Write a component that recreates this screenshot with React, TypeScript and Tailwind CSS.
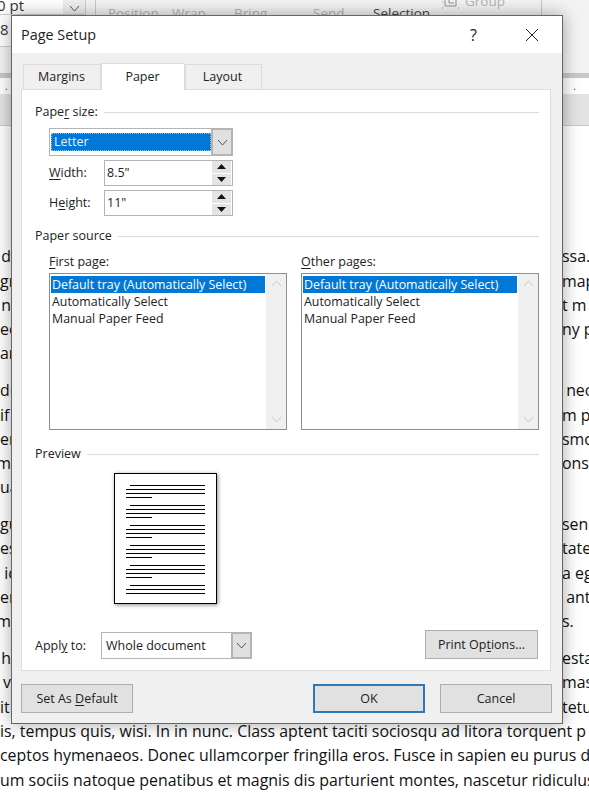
import React from "react";

const font = { fontFamily: '"Open Sans", "Noto Sans", sans-serif' };

const lines: [string, string][] = [
  ["d", "ssa."],
  ["gn", "map"],
  ["n", "t m"],
  ["ec", "ny p"],
  ["an", ""],
];
const lines2: [string, string][] = [
  ["du", " nec"],
  ["if", "m p"],
  ["er", "smo"],
  ["m", "onse"],
  ["ua", ""],
];
const lines3: [string, string][] = [
  ["gu", "sen"],
  ["es", "tate"],
  [" ic", "a eg"],
  ["er", " ant"],
  ["m", "s."],
];
const lines4: [string, string][] = [
  ["h", "esta"],
  ["v", "mas"],
  ["it", "tetu"],
];

function Para({ rows }: { rows: [string, string][] }) {
  return (
    <div className="flex flex-col">
      {rows.map(([a, b], i) => (
        <div key={i} className="flex h-[24.3px] items-center whitespace-pre">
          <span className={a.length === 1 ? "w-[11px] flex justify-end overflow-hidden" : "w-[11px] flex justify-start overflow-hidden"}>{a}</span>
          <span className="flex-1" />
          <span className="w-[27px] overflow-hidden">{b}</span>
        </div>
      ))}
    </div>
  );
}

function U({ children }: { children: React.ReactNode }) {
  return <span className="underline underline-offset-2 decoration-1">{children}</span>;
}

function Chevron({ up = false, className = "" }: { up?: boolean; className?: string }) {
  return (
    <svg width="11" height="7" viewBox="0 0 11 7" className={className}>
      <path d={up ? "M1 6 L5.5 1 L10 6" : "M1 1 L5.5 6 L10 1"} fill="none" stroke="currentColor" strokeWidth="1" />
    </svg>
  );
}

function Spinner({ value, label }: { value: string; label: React.ReactNode }) {
  return (
    <div className="flex items-center h-[26px]">
      <span className="w-[55px] pt-px text-[12.5px] text-[#222]">{label}</span>
      <div className="w-[129px] h-[26px] border border-[#b4b4b4] bg-white flex items-center justify-between pl-[2px] pr-[1px]">
        <span className="pt-px text-[12.5px] text-[#222]">{value}</span>
        <div className="flex flex-col gap-[1px] w-[19px] h-[24px]">
          <div className="flex-1 bg-[#e3e3e3] flex items-center justify-center">
            <svg width="9" height="5" viewBox="0 0 9 5"><path d="M4.5 0 L9 5 L0 5 Z" fill="#111" /></svg>
          </div>
          <div className="flex-1 bg-[#e3e3e3] flex items-center justify-center">
            <svg width="9" height="5" viewBox="0 0 9 5"><path d="M0 0 L9 0 L4.5 5 Z" fill="#111" /></svg>
          </div>
        </div>
      </div>
    </div>
  );
}

function Legend({ children }: { children: React.ReactNode }) {
  return (
    <div className="flex items-center gap-[6px] h-[18px] text-[12.5px] text-[#222]">
      <span className="whitespace-nowrap">{children}</span>
      <span className="flex-1 h-px bg-[#dcdcdc]" />
    </div>
  );
}

function ListBox({ title }: { title: React.ReactNode }) {
  return (
    <div className="w-[238px]">
      <div className="h-[18px] flex items-center text-[12.5px] text-[#222]">{title}</div>
      <div className="mt-[2px] h-[157px] border border-[#8f8f8f] bg-white flex p-[1px]">
        <div className="flex-1 text-[12.4px] leading-[17px] pt-[1px] text-[#222]">
          <div className="bg-[#0078d7] text-white pl-[1px] mr-[1px]">Default tray (Automatically Select)</div>
          <div className="pl-[1px]">Automatically Select</div>
          <div className="pl-[1px]">Manual Paper Feed</div>
        </div>
        <div className="w-[20px] bg-[#f0f0f0] flex flex-col items-center justify-between py-[6px] text-[#c8c8c8] -my-[1px] -mr-[1px]">
          <Chevron up />
          <Chevron />
        </div>
      </div>
    </div>
  );
}

function Btn({ children, className = "" }: { children: React.ReactNode; className?: string }) {
  return (
    <div className={"h-[29px] bg-[#e1e1e1] flex items-center justify-center text-[12.5px] text-[#222] pt-px " + className}>
      <span className="whitespace-pre">{children}</span>
    </div>
  );
}

function PreviewLines() {
  const groups = [0, 1, 2, 3, 4];
  return (
    <div className="pt-[11px] pl-[11px] flex flex-col">
      {groups.map((g) => (
        <div key={g} className="flex flex-col mb-[7px]">
          <div className="h-px w-[75px] ml-[4px] bg-black mb-[3px]" />
          <div className="h-px w-[79px] bg-black mb-[3px]" />
          <div className="h-px w-[79px] bg-black mb-[3px]" />
          <div className="h-px w-[26px] bg-black" />
        </div>
      ))}
      <div className="flex flex-col">
        <div className="h-px w-[75px] ml-[4px] bg-black mb-[3px]" />
        <div className="h-px w-[79px] bg-black mb-[3px]" />
        <div className="h-px w-[79px] bg-black" />
      </div>
    </div>
  );
}

export default function App() {
  return (
    <div className="relative w-[589px] h-[796px] overflow-hidden bg-white text-[#111]" style={font}>
      {/* Ribbon */}
      <div className="h-[73px] bg-[#f3f3f3] flex items-start">
        <div className="w-[86px] h-[47px] border-r border-[#cfcfcf] border-b flex flex-col shrink-0">
          <div className="h-[15px] flex border-b border-[#cfcfcf]">
            <div className="w-[63px] bg-white text-[15px] leading-[10px] text-[#333] whitespace-nowrap -indent-[3px] overflow-hidden">0 pt</div>
            <div className="flex-1 bg-[#eeeeee] flex items-end justify-center pb-[2px] text-[#555]"><Chevron /></div>
          </div>
          <div className="flex-1 flex items-center bg-white text-[15px] text-[#333] pb-[2px]">8</div>
        </div>
        <div className="w-[10px] h-[15px] border-r border-[#c8c8c8] shrink-0" />
        <div className="w-[445px] h-[15px] overflow-hidden flex text-[13.5px] leading-[18px] text-[#b5b5b5] pl-[12px] pt-[4px] whitespace-nowrap shrink-0">
          <span className="w-[64px] shrink-0">Position</span>
          <span className="w-[62px] shrink-0">Wrap</span>
          <span className="w-[79px] shrink-0">Bring</span>
          <span className="w-[60px] shrink-0">Send</span>
          <span className="w-[67px] shrink-0 text-[#444]">Selection</span>
          <svg width="20" height="9" viewBox="0 0 20 9" className="-mt-[4px] shrink-0 mr-[5px]">
            <path d="M5 0 V6 H16 V0 M9 0 V3 H14 M2 2 h1 M2 8 h1 M18 8 h1" fill="none" stroke="#8f8f8f" strokeWidth="1" />
          </svg>
          <span className="-mt-[12px] shrink-0">Group</span>
        </div>
        <div className="flex-1 h-[15px] border-l border-[#c8c8c8]" />
      </div>
      <div className="h-[5px] bg-[#c9c9c9]" />
      {/* Ruler */}
      <div className="h-[16px] bg-white flex items-center justify-between pl-[5px] pr-[13px] text-[#444] text-[10px]">
        <span>.</span><span>.</span>
      </div>
      <div className="h-[32px] bg-[#e3e3e3] border-b border-[#c9c9c9]" />
      {/* Document text */}
      <div className="pt-[119px] text-[15.9px] text-[#111] flex flex-col gap-[12.5px]">
        <Para rows={lines} />
        <Para rows={lines2} />
        <Para rows={lines3} />
        <Para rows={lines4} />
      </div>
      <div className="text-[15.9px] whitespace-nowrap flex flex-col">
        <div className="h-[24.3px] flex items-center">is, tempus quis, wisi. In in nunc. Class aptent taciti sociosqu ad litora torquent p</div>
        <div className="h-[24.3px] flex items-center">ceptos hymenaeos. Donec ullamcorper fringilla eros. Fusce in sapien eu purus d</div>
        <div className="h-[24.3px] flex items-center">um sociis natoque penatibus et magnis dis parturient montes, nascetur ridiculus</div>
      </div>

      {/* Dialog */}
      <div className="absolute left-[11px] top-[15px] w-[552px] h-[709px] bg-[#f0f0f0] border border-[#666666] shadow-[0_0_16px_rgba(0,0,0,0.35)] flex flex-col">
        <div className="h-[37px] bg-white flex items-center pl-[9px] pr-[23px] text-[14.4px] text-[#222] shrink-0">
          <span className="flex-1">Page Setup</span>
          <span className="text-[16px] mr-[48px]">?</span>
          <svg width="14" height="14" viewBox="0 0 14 14"><path d="M1 1 L13 13 M13 1 L1 13" stroke="#222" strokeWidth="1" fill="none" /></svg>
        </div>
        {/* Tabs */}
        <div className="h-[36px] flex items-end pl-[11px] shrink-0 relative z-10 text-[12.5px] text-[#222]">
          <div className="w-[78px] h-[25px] pt-px pr-px bg-[#f0f0f0] border border-[#dcdcdc] border-b-0 flex items-center justify-center">Margins</div>
          <div className="w-[84px] h-[27px] pt-px pr-px bg-white border border-[#dcdcdc] border-b-0 flex items-center justify-center -mb-[1px]">Paper</div>
          <div className="w-[77px] h-[25px] pt-px pr-[2px] bg-[#f0f0f0] border border-[#dcdcdc] border-b-0 flex items-center justify-center">Layout</div>
        </div>
        {/* Panel */}
        <div className="ml-[9px] w-[530px] h-[582px] bg-white border border-[#dcdcdc] pl-[13px] pr-[11px] pt-[13px] flex flex-col shrink-0">
          <Legend>Pape<U>r</U> size:</Legend>
          <div className="ml-[14px] mt-[7px] w-[184px] h-[28px] border border-[#b4b4b4] bg-white flex items-stretch shrink-0">
            <div className="flex-1 pt-[4px] pl-[1px] pr-[1px]">
              <div className="h-[18px] pt-px bg-[#0078d7] border border-dotted border-[#8fbfe8] text-[#e8f4ff] text-[12.5px] flex items-center pl-[2px]">Letter</div>
            </div>
            <div className="w-[22px] -m-px bg-[#e0e0e0] border-2 border-[#b4b4b4] flex items-center justify-center text-[#555]"><Chevron /></div>
          </div>
          <div className="ml-[14px] mt-[4px]"><Spinner value={'8.5"'} label={<><U>W</U>idth:</>} /></div>
          <div className="ml-[14px] mt-[4px]"><Spinner value={'11"'} label={<>H<U>e</U>ight:</>} /></div>

          <div className="mt-[11px]"><Legend>Paper source</Legend></div>
          <div className="ml-[14px] mt-[8px] flex gap-[14px]">
            <ListBox title={<span><U>F</U>irst page:</span>} />
            <ListBox title={<span><U>O</U>ther pages:</span>} />
          </div>

          <div className="mt-[15px]"><Legend>Preview</Legend></div>
          <div className="ml-[79px] mt-[10px] w-[103px] h-[131px] bg-white border border-black shadow-[1px_1px_4px_rgba(0,0,0,0.45)] shrink-0">
            <PreviewLines />
          </div>

          <div className="mt-[26px] flex items-center pr-px">
            <span className="w-[66px] pt-[3px] text-[12.5px] text-[#222]">Appl<U>y</U> to:</span>
            <div className="w-[151px] h-[27px] mt-[2px] border border-[#b4b4b4] bg-white flex items-stretch">
              <span className="flex-1 pt-px text-[12.5px] flex items-center pl-[4px] text-[#222]">Whole document</span>
              <div className="w-[21px] -m-px bg-[#e0e0e0] border-2 border-[#b4b4b4] flex items-center justify-center text-[#555]"><Chevron /></div>
            </div>
            <span className="flex-1" />
            <Btn className="w-[113px] border border-[#adadad]">Print Op<U>t</U>ions...</Btn>
          </div>
        </div>
        {/* Footer */}
        <div className="mt-[13px] ml-[9px] mr-[10px] flex items-center">
          <Btn className="w-[112px] border border-[#adadad]">Set As <U>D</U>efault</Btn>
          <span className="flex-1" />
          <Btn className="w-[112px] border-2 border-[#2f77b5]">OK</Btn>
          <Btn className="w-[112px] ml-[15px] border border-[#adadad]">Cancel</Btn>
        </div>
      </div>
    </div>
  );
}
